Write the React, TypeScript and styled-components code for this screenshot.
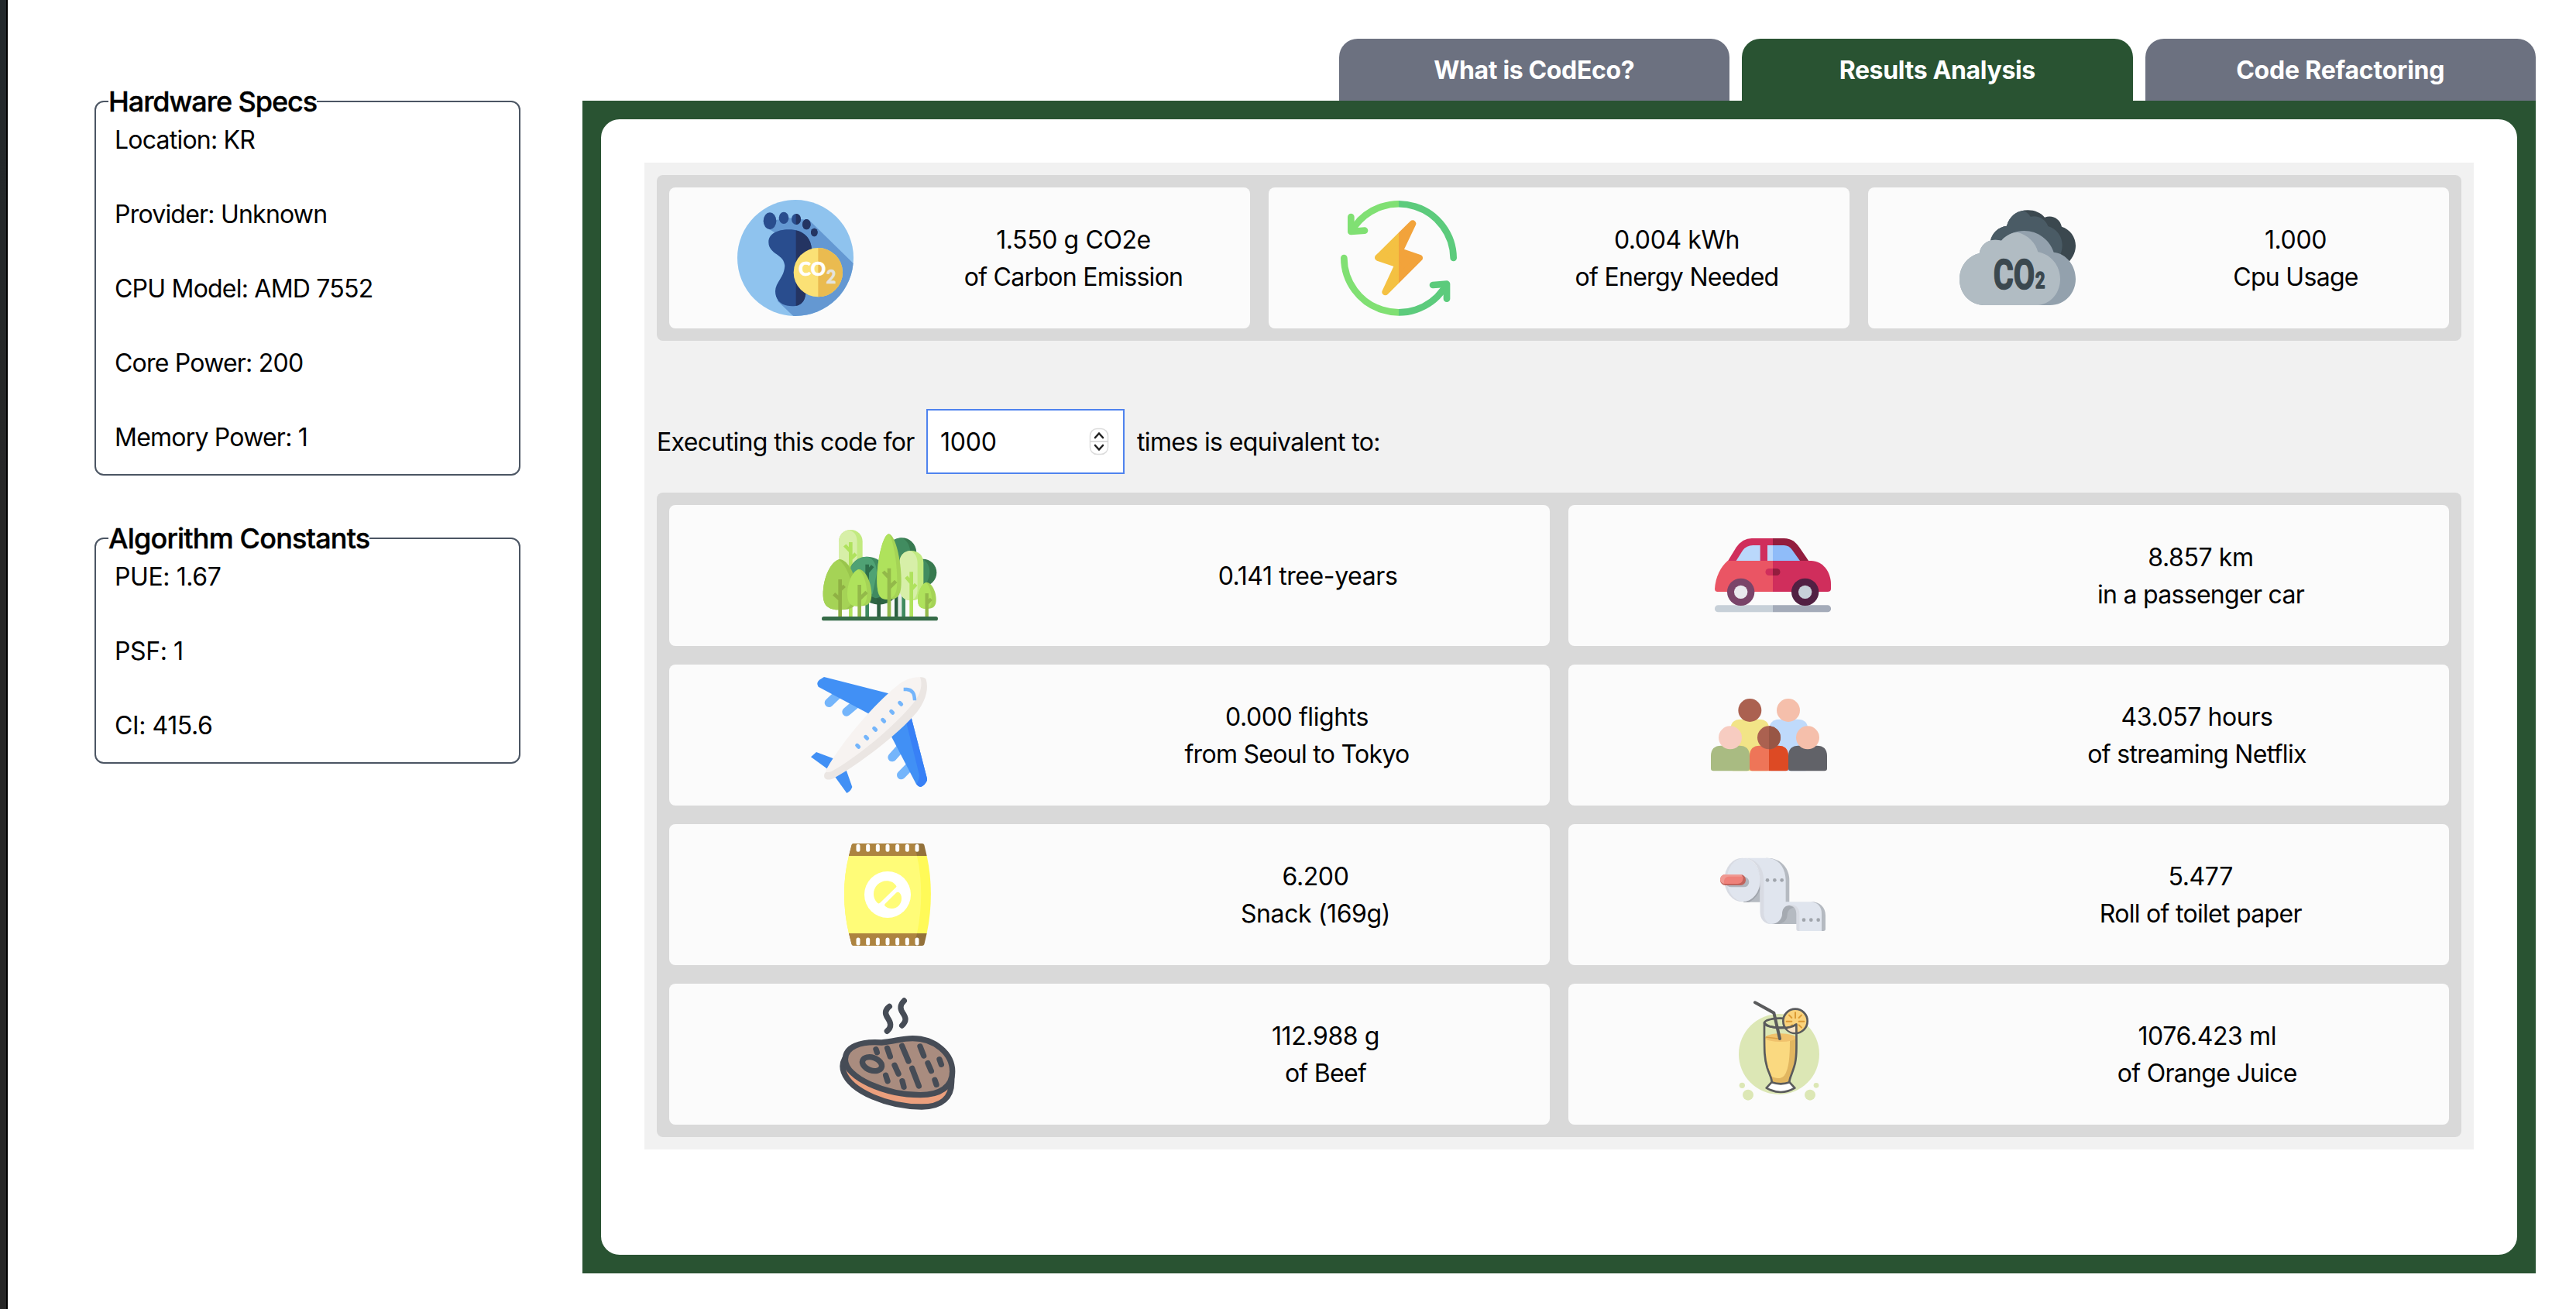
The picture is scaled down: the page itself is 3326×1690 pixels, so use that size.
import React, { useState } from "react";
import styled, { createGlobalStyle } from "styled-components";

const GlobalStyle = createGlobalStyle`
  * { box-sizing: border-box; }
  body {
    margin: 0;
    background: #fff;
    color: #000;
    font-family: Inter, "Liberation Sans", sans-serif;
    font-size: 32px;
    line-height: 48px;
    letter-spacing: -0.4px;
  }
`;

const Page = styled.div`
  display: flex;
  height: 1690px;
  overflow: hidden;
`;

const WindowEdge = styled.div`
  width: 10px;
  background: linear-gradient(#23292c, #272727 40%);
  border-right: 2px solid #000;
`;

const Sidebar = styled.aside`
  width: 662px;
  padding: 104px 0 0 112px;
  display: flex;
  flex-direction: column;
  gap: 54px;
`;

const SpecBox = styled.fieldset`
  margin: 0;
  padding: 0 24px 22px;
  border: 2px solid #4b5563;
  border-radius: 12px;
  min-width: 0;
`;

const SpecTitle = styled.legend<{ $tracking: number }>`
  margin-left: -8px;
  padding: 0;
  font-size: 36px;
  line-height: 54px;
  font-weight: 500;
  -webkit-text-stroke: 0.4px #000;
  letter-spacing: ${(p) => p.$tracking}px;
  white-space: nowrap;
`;

const SpecList = styled.div<{ $tracking: number }>`
  display: flex;
  flex-direction: column;
  gap: 48px;
  margin: -1px 0 1px;
  letter-spacing: ${(p) => p.$tracking}px;
  white-space: nowrap;
`;

const Main = styled.main`
  width: 2522px;
  margin-left: 80px;
  padding-top: 50px;
`;

const TabBar = styled.nav`
  display: flex;
  justify-content: flex-end;
  gap: 16px;
`;

const Tab = styled.button<{ $active?: boolean; $tracking?: number }>`
  width: 504.5px;
  height: 80px;
  border: 0;
  padding: 2px 0 0;
  border-radius: 24px 24px 0 0;
  background: ${(p) => (p.$active ? "#295332" : "#6c7180")};
  color: #fff;
  font: inherit;
  letter-spacing: ${(p) => p.$tracking ?? -0.35}px;
  font-weight: 700;
`;

const Panel = styled.section`
  height: 1514px;
  padding: 24px;
  background: #295332;
`;

const PanelBody = styled.div`
  height: 100%;
  padding: 56px;
  border-radius: 24px;
  background: #fff;
`;

const Results = styled.div`
  padding: 16px;
  background: #f1f1f1;
`;

const CardGrid = styled.div<{ $columns: number }>`
  display: grid;
  grid-template-columns: repeat(${(p) => p.$columns}, 1fr);
  gap: 24px;
  padding: 16px;
  border-radius: 8px;
  background: #d9d9d9;
`;

const Card = styled.div`
  display: flex;
  align-items: center;
  justify-content: space-around;
  height: 182px;
  padding: 16px;
  border-radius: 8px;
  background: #fbfbfb;
`;

const Picture = styled.svg`
  width: 150px;
  height: 150px;
  flex: none;
`;

const CardText = styled.div<{ $width: number }>`
  width: ${(p) => p.$width}px;
  display: flex;
  flex-direction: column;
  align-items: center;
  padding-top: 2px;
  white-space: nowrap;
`;

const CardLine = styled.span<{ $words: boolean }>`
  letter-spacing: ${(p) => (p.$words ? -0.7 : -0.4)}px;
`;

const RunsRow = styled.label`
  display: flex;
  align-items: center;
  margin: 88px 0 24px;
  letter-spacing: -0.64px;
  white-space: nowrap;
`;

const RunsText = styled.span<{ $width?: number }>`
  width: ${(p) => (p.$width ? `${p.$width}px` : "auto")};
  padding-top: 2px;
`;

const RunsField = styled.span`
  display: flex;
  align-items: center;
  justify-content: space-between;
  width: 256px;
  height: 84px;
  margin-right: 16px;
  padding: 0 17px 0 16px;
  border: 2px solid #4f83ee;
  background: #fff;
`;

const RunsInput = styled.input`
  width: 150px;
  border: 0;
  outline: 0;
  padding: 2px 0 0;
  background: transparent;
  color: #000;
  font: inherit;
  letter-spacing: -0.2px;
`;

const Stepper = styled.svg`
  width: 28px;
  height: 38px;
`;

const Footprint = () => (
  <Picture viewBox="66 54 450 450">
    <defs>
      <clipPath id="fp-disc"><circle cx="291" cy="279" r="225" /></clipPath>
      <clipPath id="fp-right"><rect x="293" y="54" width="223" height="450" /></clipPath>
      <clipPath id="fp-coin"><rect x="379" y="220" width="120" height="230" /></clipPath>
    </defs>
    <circle cx="291" cy="279" r="225" fill="#8fc3ee" />
    <path clipPath="url(#fp-disc)" fill="#6498d2" d="M174 158L215 132L262 124L310 128L346 134L520 305V510H289L222 446L250 310L210 180Z" />
    {["", "url(#fp-right)"].map((clip) => (
      <g key={clip} clipPath={clip || undefined} fill={clip ? "#243462" : "#294d8e"}>
        <path d="M187 218C187 185 222 169 266 169C320 169 352 200 354 245C354 300 332 330 330 390C335 430 325 466 278 466C235 466 213 440 213 408C213 375 250 350 250 310C250 265 187 265 187 218Z" />
        <ellipse cx="192" cy="136" rx="25" ry="33" />
        <ellipse cx="246" cy="124" rx="19" ry="23" />
        <ellipse cx="294" cy="129" rx="18" ry="21" />
        <ellipse cx="334" cy="149" rx="16" ry="20" />
        <ellipse cx="364" cy="180" rx="13" ry="16" />
      </g>
    ))}
    <circle cx="379" cy="335" r="95" fill="#fbe175" />
    <circle cx="379" cy="335" r="95" fill="#eabb50" clipPath="url(#fp-coin)" />
    <g fontFamily="Lato" fontWeight="900" letterSpacing="0" strokeLinejoin="round">
      <text x="304" y="348" fontSize="71" fill="#fff" stroke="#fff" strokeWidth="2" textLength="104" lengthAdjust="spacingAndGlyphs">CO</text>
      <text x="410" y="379" fontSize="75" fill="#e4e3dd" stroke="#e4e3dd" strokeWidth="2" textLength="38" lengthAdjust="spacingAndGlyphs">2</text>
    </g>
  </Picture>
);

const Energy = () => (
  <Picture viewBox="63 54 450 450">
    <defs>
      <clipPath id="en-l"><rect x="63" y="54" width="225" height="450" /></clipPath>
      <clipPath id="en-r"><rect x="288" y="54" width="225" height="450" /></clipPath>
    </defs>
    {[
      ["url(#en-l)", "#80e073", "#f4c142"],
      ["url(#en-r)", "#5ccb7c", "#f2a33b"],
    ].map(([clip, green, amber]) => (
      <g key={clip} clipPath={clip} strokeWidth="26" strokeLinecap="round" strokeLinejoin="round">
        <g fill="none" stroke={green}>
          <path d="M116 158A212 212 0 0 1 500 279" />
          <path d="M103 120V177L156 173" />
          <path d="M76 279A212 212 0 0 0 460 402" />
          <path d="M420 384L474 380V437" />
        </g>
        <path fill={amber} stroke={amber} d="M342 146L291 253L368 279L236 411L286 304L208 278Z" />
      </g>
    ))}
  </Picture>
);

const CarbonCloud = () => (
  <Picture viewBox="60 54 450 450">
    <path fill="#3b484f" d="M180 212C185 185 210 158 243 155C252 118 285 94 325 94C350 94 375 104 390 122C420 110 450 128 456 158C488 168 510 198 510 232C510 255 500 275 486 292L300 320Z" />
    <path fill="#4a5b65" d="M180 212C185 185 210 158 243 155C252 120 280 97 308 96C318 100 328 108 335 119C365 112 395 130 403 156C435 165 458 195 458 228C458 250 452 265 445 280L200 300Z" />
    <path fill="#93a1ad" d="M155 462C100 462 60 415 60 362C60 310 95 270 137 261C142 225 175 200 222 212C245 185 280 174 310 174C365 174 410 210 425 257C475 262 510 310 510 360C510 415 470 462 410 462Z" />
    <path fill="#b1bcc3" d="M155 462C100 462 60 415 60 362C60 310 95 270 137 261C142 225 175 200 222 212C240 192 262 181 285 180C325 190 355 220 364 256C415 265 450 310 450 360C450 410 420 455 365 462Z" />
    <text transform="translate(191 399) scale(0.735 1)" fill="#3b484f" stroke="#3b484f" strokeWidth="5" strokeLinejoin="round" fontFamily="Roboto" fontWeight="700" fontSize="162" letterSpacing="0">
      CO<tspan dx="4" dy="-3" fontSize="88">2</tspan>
    </text>
  </Picture>
);

const Forest = () => (
  <Picture viewBox="93 24 450 450">
    <path fill="#c2ea80" d="M159 118C159 90 180 72 205 72C230 72 251 90 251 118V360H159Z" />
    <path fill="#d7efa8" d="M159 118C159 92 178 74 200 73C222 80 230 98 230 120V360H159Z" />
    <path fill="none" stroke="#afe25d" strokeWidth="14" d="M205 120V410M205 156L182 132M205 185L225 165" />
    <circle cx="315" cy="278" r="84" fill="#2e6544" />
    <path fill="#3f8a60" d="M270 176C320 176 352 220 350 275C348 312 330 334 300 337L220 300L205 215C218 190 240 176 270 176Z" />
    <path fill="#4fa274" d="M203 225C212 195 238 176 268 176C292 182 306 205 306 240L290 320H210Z" />
    <path fill="none" stroke="#2e6f4b" strokeWidth="14" d="M269 206V300M269 236L290 212" />
    <path stroke="#3f8a60" strokeWidth="14" d="M269 300V410" />
    <path stroke="#2b5f3f" strokeWidth="14" d="M314 340V410M382 320V410" />
    <path stroke="#e4ebe7" strokeWidth="14" d="M396 320V410" />
    <path stroke="#3f8a60" strokeWidth="14" d="M410 320V410" />
    <circle cx="485" cy="238" r="53" fill="#37794f" />
    <path fill="#418c60" d="M484 186C512 200 520 240 498 280L470 280Z" />
    <path fill="#37794f" d="M372 112C410 88 458 112 460 160V210H380Z" />
    <path fill="#418c60" d="M370 112C385 104 395 102 404 104C425 112 436 135 436 165L390 190Z" />
    <path fill="#c2ea80" d="M394 200C394 170 415 153 440 153C466 153 487 172 487 200V300C487 330 466 346 440 346C415 346 394 330 394 300Z" />
    <path fill="#d7efa8" d="M394 200C394 172 412 155 434 153C455 160 464 178 464 205V300C464 325 455 340 440 346C415 346 394 330 394 300Z" />
    <path fill="none" stroke="#afe25d" strokeWidth="14" d="M440 235V410M440 278L420 254M440 303L458 283" />
    <path fill="#a5d356" d="M353 88C378 92 401 190 401 270C401 325 390 342 353 342C318 342 307 322 307 265C307 190 330 90 353 88Z" />
    <path fill="#afe25c" d="M353 88C368 105 385 195 385 270C385 315 378 336 345 342C316 342 307 322 307 265C307 190 330 90 353 88Z" />
    <path fill="none" stroke="#93b94a" strokeWidth="14" d="M354 221V410M354 258L331 234M354 297L380 271" />
    <path fill="#99c54c" d="M164 186C195 190 230 250 230 325C230 370 212 382 164 382C116 382 98 365 98 320C98 250 135 188 164 186Z" />
    <path fill="#a5d356" d="M158 188C185 205 212 260 212 325C212 365 195 382 164 382C116 382 98 365 98 320C98 255 130 193 158 188Z" />
    <path fill="none" stroke="#8fb144" strokeWidth="14" d="M164 264V410M164 342L140 320M164 305L181 289" />
    <path fill="#a5d356" d="M239 225C262 228 286 275 286 322C286 355 275 368 239 368C203 368 192 355 192 320C192 275 216 227 239 225Z" />
    <path fill="#afe25c" d="M236 226C255 240 268 280 268 322C268 352 258 368 235 368C203 368 192 355 192 320C192 275 214 230 236 226Z" />
    <path fill="none" stroke="#93b94a" strokeWidth="14" d="M239 285V410M239 340L267 313" />
    <path fill="#a5d356" d="M500 275C520 278 536 312 536 342C536 368 526 378 500 378C475 378 465 368 465 342C465 312 482 277 500 275Z" />
    <path fill="#afe25c" d="M497 276C510 288 519 315 519 342C519 366 512 377 492 378C473 376 465 366 465 342C465 312 480 280 497 276Z" />
    <path fill="none" stroke="#93b94a" strokeWidth="13" d="M500 318V410M500 358L517 340" />
    <rect x="93" y="408" width="450" height="16" rx="8" fill="#356b47" />
  </Picture>
);

const Car = () => (
  <Picture viewBox="72 24 450 450">
    <path fill="#d02e5c" d="M122 194L155 140Q180 105 215 105H297V194Z" />
    <path fill="#931d3e" d="M297 105H340C370 105 385 120 400 140L437 194H297Z" />
    <path fill="#bad8fb" d="M155 192L180 152Q195 132 220 132H248V192ZM276 132H297V192H276Z" />
    <path fill="#8fbcf9" d="M297 132H340Q360 132 372 150L402 192H297Z" />
    <path fill="#ea5564" d="M72 300C75 255 95 215 122 192H297V312H82Q72 312 72 300Z" />
    <path fill="#d02e5c" d="M297 192H445C490 192 522 235 522 282V300Q522 312 510 312H297Z" />
    <path fill="#d02e5c" d="M297 222H282A13.500 13.500 0 0 0 282 249H297Z" />
    <path fill="#931d3e" d="M297 222H312A13.500 13.500 0 0 1 312 249H297Z" />
    <path fill="#c7d0d8" d="M297 364H85A13.500 13.500 0 0 0 85 391H297Z" />
    <path fill="#a4abb9" d="M297 364H509A13.500 13.500 0 0 1 509 391H297Z" />
    <circle cx="173" cy="313" r="53" fill="#7a4469" />
    <circle cx="173" cy="313" r="26" fill="#e9e9ee" />
    <circle cx="422" cy="313" r="53" fill="#522043" />
    <circle cx="422" cy="313" r="26" fill="#c7d0d8" />
  </Picture>
);

const Plane = () => (
  <Picture viewBox="51 642 450 450">
    <path stroke="#74b5fb" strokeWidth="34" strokeLinecap="round" d="M160 705L121 742M230 742L189 777M402 913L366 953M440 982L401 1022" />
    <path fill="#4190f5" d="M102 642L352 706L278 786L80 680Q70 664 84 653Z" />
    <path fill="#4190f5" d="M438 792L502 1040Q495 1060 478 1068Q465 1067 458 1055L357 862Z" />
    <path fill="#3880f6" d="M438 792L502 1040Q495 1060 476 1068Q465 1067 460 1056Q470 1045 471 1022L419 812Z" />
    <path fill="#4190f5" d="M72 933L138 958L115 998L51 952Z" />
    <path fill="#4190f5" d="M188 1003L211 1068Q205 1085 190 1092L144 1028Z" />
    <path fill="#ebe6e3" d="M104 1016C180 930 390 750 474 643C485 642 494 645 497 652C508 690 495 735 462 778C390 865 230 985 140 1034C115 1046 96 1038 104 1016Z" />
    <path fill="#f7f3f1" d="M112 998C180 880 300 745 380 680C412 652 445 641 474 643C484 668 478 705 450 740C380 830 220 960 130 1008C116 1014 104 1012 112 998Z" />
    <path stroke="#74b5fb" strokeWidth="15" strokeLinecap="round" d="M395 742L401 748M362 775L368 781M329 808L335 814M296 841L302 847M263 874L269 880M230 907L236 913" />
    <path fill="none" stroke="#74b5fb" strokeWidth="13" d="M410 690H422Q453 692 453 733" />
  </Picture>
);

const Body = ({ x, y, fill }: { x: number; y: number; fill: string }) => (
  <path fill={fill} d={`M${x} 996V${y + 40}Q${x} ${y} ${x + 40} ${y}H${x + 110}Q${x + 150} ${y} ${x + 150} ${y + 40}V996Q${x + 150} 1006 ${x + 140} 1006H${x + 10}Q${x} 1006 ${x} 996Z`} />
);

const Audience = () => (
  <Picture viewBox="57 642 450 450">
    <defs>
      <clipPath id="au-r"><rect x="282" y="800" width="75" height="206" /></clipPath>
    </defs>
    <Body x={133} y={806} fill="#f2e487" />
    <Body x={283} y={806} fill="#bfdafb" />
    <circle cx="208" cy="771" r="45" fill="#ab6150" />
    <circle cx="357" cy="771" r="45" fill="#f5bfab" />
    <Body x={57} y={908} fill="#a9bb82" />
    <Body x={207} y={908} fill="#ee7558" />
    <g clipPath="url(#au-r)"><Body x={207} y={908} fill="#dd4a24" /></g>
    <Body x={357} y={908} fill="#616268" />
    <circle cx="132" cy="877" r="45" fill="#f7ccc1" />
    <circle cx="282" cy="877" r="45" fill="#ab6150" />
    <circle cx="282" cy="877" r="45" fill="#985645" clipPath="url(#au-r)" />
    <circle cx="432" cy="877" r="45" fill="#f5bfab" />
  </Picture>
);

const Snack = () => (
  <Picture viewBox="33 30 450 450">
    <path fill="#fffa58" d="M108 105C84 200 84 305 108 405H410C431 305 431 200 410 105Z" />
    <path fill="#fffc78" d="M108 105C84 200 84 305 108 405H372C393 305 393 200 372 105Z" />
    <path fill="#93713a" d="M108 105L119 62Q121 57 127 57H392Q398 57 400 62L410 105ZM108 405L119 448Q121 453 127 453H392Q398 453 400 448L410 405Z" />
    <path fill="#ad8440" d="M108 105L119 62Q121 57 127 57H362L372 105ZM108 405L119 448Q121 453 127 453H362L372 405Z" />
    <path stroke="#fff" strokeWidth="15" strokeLinecap="round" d={[144, 182, 220, 258, 296, 334, 372].map((x) => `M${x} 67V82M${x} 429V444`).join("")} />
    <circle cx="258" cy="255" r="90" fill="#fff" />
    <path fill="#fffc78" d="M292 222C283 208 270 202 254 202C226 202 204 226 204 252C204 268 211 280 220 288Q225 291 230 286L290 227Q294 224 292 222Z" />
    <path fill="#fffc78" d="M248 291L291 248Q297 243 303 247C309 252 312 260 312 270C312 292 296 309 275 309C264 309 254 305 248 299Q244 295 248 291Z" />
  </Picture>
);

const ToiletPaper = () => (
  <Picture viewBox="72 30 450 450">
    <path fill="#b5bac1" d="M272 113C325 113 361 150 361 200V290H335L262 120Z" />
    <path fill="#b5bac1" d="M183 284H248V190Z" />
    <path fill="#a0a5ac" d="M183 284H205C228 272 243 252 250 228V190Z" />
    <ellipse cx="179" cy="198" rx="70" ry="85" fill="#d8dbe3" />
    <ellipse cx="183" cy="198" rx="64" ry="84" fill="#e0e5ee" />
    <path fill="#b5bac1" d="M290 369H390V320C388 300 375 290 350 296L325 330Z" />
    <path fill="#a5aab1" d="M290 369H322C345 362 352 350 353 333C354 318 362 308 378 305L350 290L325 320Z" />
    <path fill="#e0e5ee" d="M183 113H272C320 113 346 150 347 200V283H450C475 285 486 305 486 330V396H400V330C400 305 385 297 360 297C340 297 333 315 333 330C333 350 315 369 290 369C265 369 248 350 248 320V200C248 150 225 113 183 113Z" />
    <path fill="#d8dbe3" d="M183 113C232 113 262 150 262 200V325C262 350 275 368 292 369C265 369 248 350 248 325V200C248 150 225 116 183 113Z" />
    <path fill="#d8dbe3" d="M340 306C352 287 401 288 401 330V396H396Q388 396 388 388V330C388 308 376 297 360 297C350 297 344 301 340 306Z" />
    <path fill="#b5bac1" d="M445 283C480 283 501 305 501 335V388Q501 396 493 396H486V330C486 305 475 287 445 283Z" />
    <g fill="#a0a5ac">
      {[[276, 199], [304, 199], [332, 199], [417, 353], [445, 353], [473, 353]].map(([x, y]) => (
        <circle key={`${x}-${y}`} cx={x} cy={y} r="7" />
      ))}
    </g>
    <rect x="115" y="186" width="90" height="40" rx="20" fill="#b0b5bd" />
    <rect x="93" y="177" width="99" height="42" rx="20" fill="#c0635c" />
    <path fill="#f09a93" d="M114 177H176L182 192L120 213H108C98 210 93 204 93 197C93 185 102 177 114 177Z" />
    <path fill="#ef817a" d="M127 185H181C183 203 176 212 160 213H108C106 196 112 186 127 185Z" />
  </Picture>
);

const Steak = () => (
  <Picture viewBox="72 648 450 450">
    <g stroke="#464c56" strokeWidth="22" strokeLinecap="round" strokeLinejoin="round">
      <path fill="#eb9f7d" d="M92 890C82 908 82 925 88 942C115 1018 260 1077 390 1077C470 1077 506 1038 506 980L508 930Z" />
      <path fill="#a98c7f" d="M94 893C94 845 150 822 235 828C285 824 310 812 355 812C440 812 509 870 509 940C509 1000 460 1031 385 1031C250 1031 94 965 94 893Z" />
      <ellipse cx="198" cy="911" rx="39" ry="25" transform="rotate(20 198 911)" fill="none" />
      <path fill="none" d="M213 854L217 866M257 850L268 882M314 841L339 900M384 843L398 879M459 893L466 913M414 908L427 938M285 916L300 949M353 928L379 996M251 955L258 977M315 977L321 1000M441 973L447 991" />
      <path fill="none" d="M265 688C246 702 248 718 258 732C270 750 276 766 256 784M322 666C304 684 307 698 316 712C330 732 332 744 314 762" />
    </g>
  </Picture>
);

const Juice = () => (
  <Picture viewBox="96 648 450 450">
    <g fill="#dce7b5">
      <circle cx="321" cy="873" r="156" />
      <circle cx="178" cy="994" r="11" />
      <circle cx="201" cy="1031" r="21" />
      <circle cx="441" cy="1031" r="21" />
      <circle cx="465" cy="994" r="10" />
    </g>
    <path fill="#e1b660" d="M267 808C267 860 268 890 278 925C288 955 294 965 294 982Q328 992 360 982C362 960 375 940 380 910C388 880 388 840 387 806Z" />
    <path fill="#fad980" d="M267 808C267 860 268 890 278 925L290 958C310 970 330 968 341 956C360 930 363 880 363 815Z" />
    <ellipse cx="327" cy="809" rx="60" ry="16" fill="#f0c26c" />
    <path stroke="#d99f45" strokeWidth="4" d="M270 807L318 813" />
    <g fill="none" stroke="#5a5b5c" strokeWidth="8" strokeLinejoin="round" strokeLinecap="round">
      <ellipse cx="326" cy="752" rx="62" ry="18" />
      <circle cx="384" cy="745" r="47" fill="#fad37c" />
    </g>
    <path fill="#f8e3c6" d="M352 776L384 766V788Q366 790 352 776Z" />
    <path stroke="#dc9a33" strokeWidth="6" strokeLinecap="round" d="M384 712V733M398 732L408 722M398 746H418M350 746H370M370 732L360 722M398 760L408 770M372 760L366 766" />
    <g fill="none" stroke="#5a5b5c" strokeWidth="8" strokeLinejoin="round" strokeLinecap="round">
      <path d="M264 752C285 776 360 778 388 757C389 850 390 890 380 920C370 955 361 965 361 982M264 752C264 860 263 885 275 925C285 955 293 965 293 982" />
      <path fill="#fff" d="M292 982Q328 994 362 982L382 1004Q328 1036 272 1004Z" />
      <path strokeWidth="12" d="M228 673L301 713L324 813" />
    </g>
  </Picture>
);

type Item = { icon: React.FC; lines: string[]; width: number };

const totals: Item[] = [
  { icon: Footprint, lines: ["1.550 g CO2e", "of Carbon Emission"], width: 280 },
  { icon: Energy, lines: ["0.004 kWh", "of Energy Needed"], width: 260 },
  { icon: CarbonCloud, lines: ["1.000", "Cpu Usage"], width: 160 },
];

const equivalents: Item[] = [
  { icon: Forest, lines: ["0.141 tree-years"], width: 231 },
  { icon: Car, lines: ["8.857 km", "in a passenger car"], width: 263 },
  { icon: Plane, lines: ["0.000 flights", "from Seoul to Tokyo"], width: 287 },
  { icon: Audience, lines: ["43.057 hours", "of streaming Netflix"], width: 283 },
  { icon: Snack, lines: ["6.200", "Snack (169g)"], width: 191 },
  { icon: ToiletPaper, lines: ["5.477", "Roll of toilet paper"], width: 264 },
  { icon: Steak, lines: ["112.988 g", "of Beef"], width: 139 },
  { icon: Juice, lines: ["1076.423 ml", "of Orange Juice"], width: 230 },
];

const specs = [
  {
    title: "Hardware Specs",
    titleTracking: -1.05,
    tracking: -0.78,
    rows: ["Location: KR", "Provider: Unknown", "CPU Model: AMD 7552", "Core Power: 200", "Memory Power: 1"],
  },
  { title: "Algorithm Constants", titleTracking: -0.8, tracking: -0.4, rows: ["PUE: 1.67", "PSF: 1", "CI: 415.6"] },
];

const Cards = ({ items, columns }: { items: Item[]; columns: number }) => (
  <CardGrid $columns={columns}>
    {items.map(({ icon: Icon, lines, width }) => (
      <Card key={lines[0]}>
        <Icon />
        <CardText $width={width}>
          {lines.map((line) => (
            <CardLine key={line} $words={!/\d/.test(line)}>{line}</CardLine>
          ))}
        </CardText>
      </Card>
    ))}
  </CardGrid>
);

export default function App() {
  const [runs, setRuns] = useState("1000");
  return (
    <>
      <GlobalStyle />
      <Page>
        <WindowEdge />
        <Sidebar>
          {specs.map((spec) => (
            <SpecBox key={spec.title}>
              <SpecTitle $tracking={spec.titleTracking}>{spec.title}</SpecTitle>
              <SpecList $tracking={spec.tracking}>
                {spec.rows.map((row) => (
                  <div key={row}>{row}</div>
                ))}
              </SpecList>
            </SpecBox>
          ))}
        </Sidebar>
        <Main>
          <TabBar>
            <Tab>What is CodEco?</Tab>
            <Tab $active>Results Analysis</Tab>
            <Tab $tracking={-0.2}>Code Refactoring</Tab>
          </TabBar>
          <Panel>
            <PanelBody>
              <Results>
                <Cards items={totals} columns={3} />
                <RunsRow>
                  <RunsText $width={348}>Executing this code for</RunsText>
                  <RunsField>
                    <RunsInput value={runs} onChange={(e) => setRuns(e.target.value)} />
                    <Stepper viewBox="0 0 28 38">
                      <rect x="2.500" y="2.500" width="23" height="33" rx="9" fill="#fff" stroke="#dcdcdc" strokeWidth="1.500" />
                      <path d="M2.500 19H25.500" stroke="#d0d0d0" strokeWidth="1.500" />
                      <path d="M9 14L14 8.500L19 14M9 24L14 29.500L19 24" fill="none" stroke="#222" strokeWidth="2.600" strokeLinecap="round" strokeLinejoin="round" />
                    </Stepper>
                  </RunsField>
                  <RunsText>times is equivalent to:</RunsText>
                </RunsRow>
                <Cards items={equivalents} columns={2} />
              </Results>
            </PanelBody>
          </Panel>
        </Main>
      </Page>
    </>
  );
}
